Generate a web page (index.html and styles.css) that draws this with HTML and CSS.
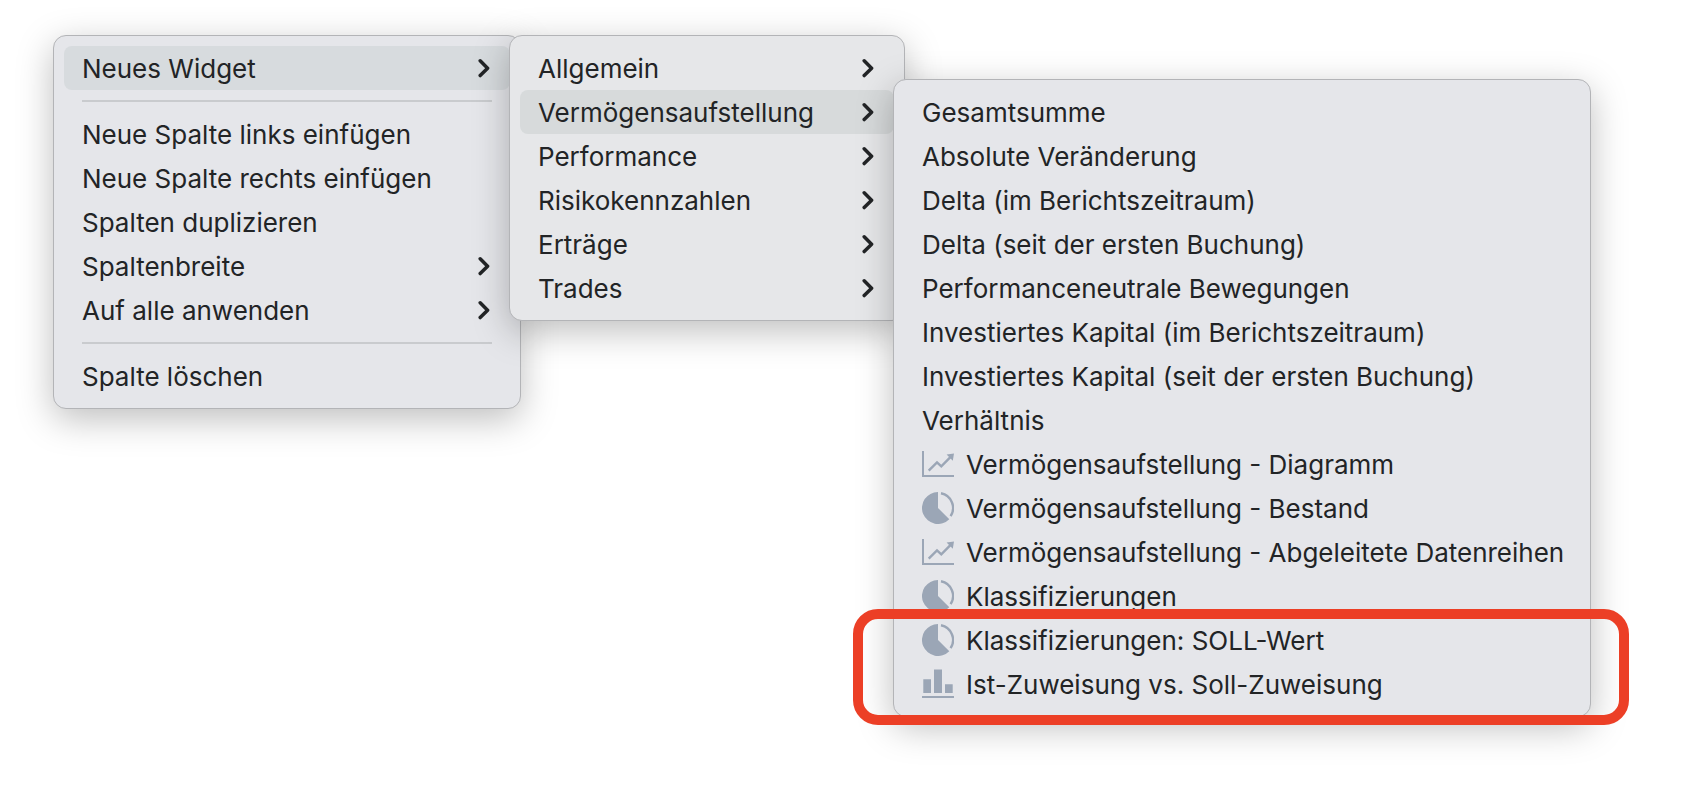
FILE: index.html
```html
<!DOCTYPE html>
<html lang="de">
  <head>
    <meta charset="UTF-8" />
    <meta name="viewport" content="width=device-width, initial-scale=1.0" />
    <title>Neues Widget</title>
    <link rel="stylesheet" href="styles.css">
  </head>
  <body>
    <!-- Shared icons -->
    <svg class="sprite" aria-hidden="true">
      <symbol id="chevron" viewBox="0 0 12 20">
        <path d="M2.2 2.8 L9.6 10.2 L2.2 17.6" fill="none" stroke="#222426" stroke-width="3.5" stroke-linecap="round" stroke-linejoin="round" />
      </symbol>
      <symbol id="line-chart" viewBox="0 0 32 32">
        <path d="M1 3 V28 H32" fill="none" stroke="currentColor" stroke-width="2" />
        <path d="M6.7 22.6 L15 14.4 L19.3 18.4 L28.4 9.2" fill="none" stroke="currentColor" stroke-width="2.4" />
        <path d="M32 5.4 L24.6 6.6 L30.8 12.8 Z" fill="currentColor" />
      </symbol>
      <symbol id="pie-chart" viewBox="0 0 32 32">
        <path d="M16 16 V0 A16 16 0 1 0 27.3 27.3 Z" fill="currentColor" />
        <path d="M19 1.3 A15 15 0 0 1 28.6 24.2" fill="none" stroke="currentColor" stroke-width="2.4" />
      </symbol>
      <symbol id="bar-chart" viewBox="0 0 32 32">
        <path d="M1.3 11.3 H9 V25 H1.3 Z M12 1.6 H20 V25 H12 Z M23 16.3 H30.7 V25 H23 Z M0 28 H32 V30 H0 Z" fill="currentColor" />
      </symbol>
    </svg>

    <main class="menus">
      <ul class="menu" role="menu">
        <li><button type="button" class="item active">Neues Widget<svg class="chevron"><use href="#chevron" /></svg></button></li>
        <li class="separator" role="separator"></li>
        <li><button type="button" class="item">Neue Spalte links einfügen</button></li>
        <li><button type="button" class="item">Neue Spalte rechts einfügen</button></li>
        <li><button type="button" class="item">Spalten duplizieren</button></li>
        <li><button type="button" class="item">Spaltenbreite<svg class="chevron"><use href="#chevron" /></svg></button></li>
        <li><button type="button" class="item">Auf alle anwenden<svg class="chevron"><use href="#chevron" /></svg></button></li>
        <li class="separator" role="separator"></li>
        <li><button type="button" class="item">Spalte löschen</button></li>
      </ul>

      <ul class="menu submenu" role="menu">
        <li><button type="button" class="item">Allgemein<svg class="chevron"><use href="#chevron" /></svg></button></li>
        <li><button type="button" class="item active">Vermögensaufstellung<svg class="chevron"><use href="#chevron" /></svg></button></li>
        <li><button type="button" class="item">Performance<svg class="chevron"><use href="#chevron" /></svg></button></li>
        <li><button type="button" class="item">Risikokennzahlen<svg class="chevron"><use href="#chevron" /></svg></button></li>
        <li><button type="button" class="item">Erträge<svg class="chevron"><use href="#chevron" /></svg></button></li>
        <li><button type="button" class="item">Trades<svg class="chevron"><use href="#chevron" /></svg></button></li>
      </ul>

      <div class="widgets">
        <ul class="menu" role="menu">
          <li><button type="button" class="item">Gesamtsumme</button></li>
          <li><button type="button" class="item">Absolute Veränderung</button></li>
          <li><button type="button" class="item">Delta (im Berichtszeitraum)</button></li>
          <li><button type="button" class="item">Delta (seit der ersten Buchung)</button></li>
          <li><button type="button" class="item">Performanceneutrale Bewegungen</button></li>
          <li><button type="button" class="item">Investiertes Kapital (im Berichtszeitraum)</button></li>
          <li><button type="button" class="item">Investiertes Kapital (seit der ersten Buchung)</button></li>
          <li><button type="button" class="item">Verhältnis</button></li>
          <li><button type="button" class="item"><svg class="icon"><use href="#line-chart" /></svg>Vermögensaufstellung - Diagramm</button></li>
          <li><button type="button" class="item"><svg class="icon"><use href="#pie-chart" /></svg>Vermögensaufstellung - Bestand</button></li>
          <li><button type="button" class="item"><svg class="icon"><use href="#line-chart" /></svg>Vermögensaufstellung - Abgeleitete Datenreihen</button></li>
          <li><button type="button" class="item"><svg class="icon"><use href="#pie-chart" /></svg>Klassifizierungen</button></li>
          <li><button type="button" class="item"><svg class="icon"><use href="#pie-chart" /></svg>Klassifizierungen: SOLL-Wert</button></li>
          <li><button type="button" class="item"><svg class="icon"><use href="#bar-chart" /></svg>Ist-Zuweisung vs. Soll-Zuweisung</button></li>
        </ul>
        <div class="marker"></div>
      </div>
    </main>
  </body>
</html>
```

FILE: styles.css
```css
* {
  box-sizing: border-box;
}
body {
  margin: 0;
  padding: 35px 103px 72px 53px;
  background: #fff;
  color: #222426;
  font-family: Inter, "Liberation Sans", sans-serif;
  font-size: 26px;
}
.sprite {
  display: none;
}
.menus {
  display: grid;
  grid-template-columns: minmax(0, 456fr) minmax(0, 384fr) minmax(0, 698fr);
  align-items: start;
}
.menu {
  list-style: none;
  margin: 0 -12px 0 0;
  padding: 10px;
  background: #e5e6ea;
  border: 1px solid #b3b4b7;
  border-radius: 13px;
  box-shadow: 0 10px 36px rgba(0, 0, 0, 0.26);
}
.submenu {
  position: relative;
  background: #e6e7e9;
}
.item {
  display: flex;
  align-items: center;
  gap: 12px;
  width: 100%;
  height: 44px;
  padding: 0 18px;
  border: none;
  border-radius: 8px;
  background: none;
  color: inherit;
  font: inherit;
  text-align: left;
  white-space: nowrap;
}
.item:hover,
.item.active {
  background: #d7dbde;
}
.submenu .item.active {
  background: #d7dadb;
}
.chevron {
  width: 12px;
  height: 20px;
  margin-left: auto;
  margin-right: 2px;
}
.icon {
  flex: none;
  width: 32px;
  height: 32px;
  color: #9ba6b6;
}
.separator {
  height: 2px;
  margin: 10px 18px;
  background: #c9cbce;
}
.widgets {
  position: relative;
  margin-top: 44px;
}
.widgets .menu {
  margin: 0;
}

/* red frame around the last two entries */
.marker {
  position: absolute;
  left: -40px;
  right: -38px;
  bottom: -8px;
  height: 116px;
  border: 10px solid #ec3f26;
  border-radius: 25px;
  pointer-events: none;
}
```
